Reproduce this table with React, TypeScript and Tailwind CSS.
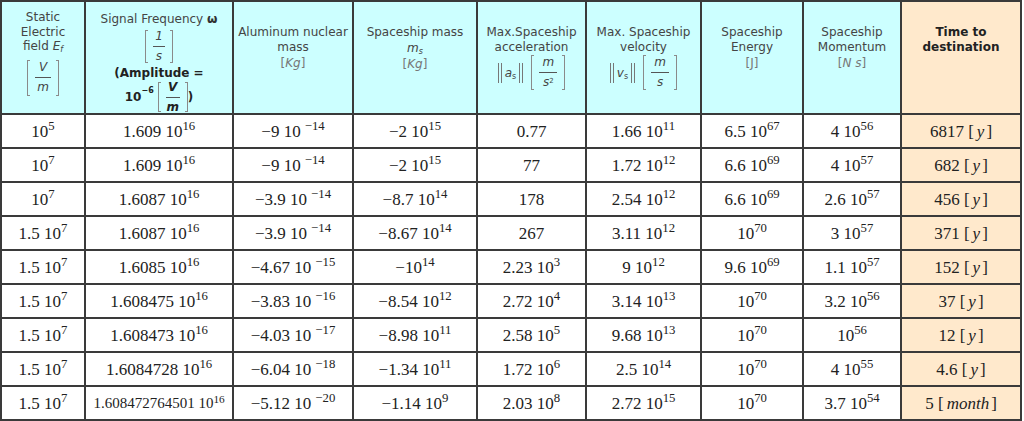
import React from 'react';

type Cell = [string, string?];

const rows: Cell[][] = [
    [['10', '5'], ['1.609 10', '16'], ['−9 10', '−14'], ['−2 10', '15'], ['0.77'], ['1.66 10', '11'], ['6.5 10', '67'], ['4 10', '56'], ['6817', 'y']],
    [['10', '7'], ['1.609 10', '16'], ['−9 10', '−14'], ['−2 10', '15'], ['77'], ['1.72 10', '12'], ['6.6 10', '69'], ['4 10', '57'], ['682', 'y']],
    [['10', '7'], ['1.6087 10', '16'], ['−3.9 10', '−14'], ['−8.7 10', '14'], ['178'], ['2.54 10', '12'], ['6.6 10', '69'], ['2.6 10', '57'], ['456', 'y']],
    [['1.5 10', '7'], ['1.6087 10', '16'], ['−3.9 10', '−14'], ['−8.67 10', '14'], ['267'], ['3.11 10', '12'], ['10', '70'], ['3 10', '57'], ['371', 'y']],
    [['1.5 10', '7'], ['1.6085 10', '16'], ['−4.67 10', '−15'], ['−10', '14'], ['2.23 10', '3'], ['9 10', '12'], ['9.6 10', '69'], ['1.1 10', '57'], ['152', 'y']],
    [['1.5 10', '7'], ['1.608475 10', '16'], ['−3.83 10', '−16'], ['−8.54 10', '12'], ['2.72 10', '4'], ['3.14 10', '13'], ['10', '70'], ['3.2 10', '56'], ['37', 'y']],
    [['1.5 10', '7'], ['1.608473 10', '16'], ['−4.03 10', '−17'], ['−8.98 10', '11'], ['2.58 10', '5'], ['9.68 10', '13'], ['10', '70'], ['10', '56'], ['12', 'y']],
    [['1.5 10', '7'], ['1.6084728 10', '16'], ['−6.04 10', '−18'], ['−1.34 10', '11'], ['1.72 10', '6'], ['2.5 10', '14'], ['10', '70'], ['4 10', '55'], ['4.6', 'y']],
    [['1.5 10', '7'], ['1.608472764501 10', '16'], ['−5.12 10', '−20'], ['−1.14 10', '9'], ['2.03 10', '8'], ['2.72 10', '15'], ['10', '70'], ['3.7 10', '54'], ['5', 'month']],
];

function Bracket({ side, h }: { side: 'l' | 'r'; h: string }) {
    return <span className={`w-[3px] ${h} border-y border-[#8a8a8a] ${side === 'l' ? 'border-l' : 'border-r'}`} />;
}

function Frac({ top, bottom, bold, h, w }: { top: React.ReactNode; bottom: React.ReactNode; bold?: boolean; h: string; w: string }) {
    return (
        <span className="inline-flex items-center">
            <Bracket side="l" h={h} />
            <span className={`flex flex-col items-center px-[5px] ${bold ? 'font-bold text-[#222]' : ''}`}>
                <span className="leading-[13px] italic">{top}</span>
                <span className={`h-px ${w} bg-[#555] my-[3px]`} />
                <span className="leading-[13px] italic">{bottom}</span>
            </span>
            <Bracket side="r" h={h} />
        </span>
    );
}

function Norm({ v }: { v: string }) {
    return (
        <span className="inline-flex items-center">
            <span className="h-[20px] w-[4px] border-x border-[#777]" />
            <span className="italic px-[3px] leading-none">
                {v}
                <sub className="text-[8px] not-italic">s</sub>
            </span>
            <span className="h-[20px] w-[4px] border-x border-[#777]" />
        </span>
    );
}

function Head({ children, first, peach, bold }: { children: React.ReactNode; first?: boolean; peach?: boolean; bold?: boolean }) {
    return (
        <div
            className={`flex flex-col items-center text-center text-[12px] leading-[14.5px] ${bold ? 'font-bold text-[#222]' : 'text-[#454545]'} ${first ? 'pt-[8px]' : 'pt-[23px]'} ${peach ? 'bg-[#ffe9cc]' : 'bg-[#ccffff]'}`}
        >
            {children}
        </div>
    );
}

function Value({ cell, last, small }: { cell: Cell; last: boolean; small: boolean }) {
    const [m, e] = cell;
    return (
        <div
            className={`flex items-center justify-center pt-[1px] font-['Liberation_Serif',serif] text-[#222] ${small ? 'text-[15px]' : 'text-[17px]'} ${last ? 'bg-[#ffe9cc]' : 'bg-white'}`}
        >
            {last ? (
                <span>
                    {m} [<span className="italic ml-[3px] mr-[2px]">{e}</span>]
                </span>
            ) : (
                <span>
                    {m}
                    {e && <sup className={e.startsWith('−') ? 'ml-[4px]' : ''}>{e}</sup>}
                </span>
            )}
        </div>
    );
}

export default function App() {
    return (
        <div className="w-[1024px] h-[421px] bg-white font-['DejaVu_Sans',sans-serif]">
            <div className="grid w-fit grid-cols-[82px_146px_118px_122px_107px_113px_100px_96px_118px] grid-rows-[111px_repeat(9,32px)] gap-[2px] border-2 border-[#3a3a3a] bg-[#3a3a3a]">
                <Head first>
                    <span>Static</span>
                    <span>Electric</span>
                    <span>
                        field <span className="italic">E</span>
                        <sub className="italic text-[8px]">f</sub>
                    </span>
                    <span className="mt-[6px]">
                        <Frac top="V" bottom="m" h="h-[36px]" w="w-[16px]" />
                    </span>
                </Head>
                <Head first>
                    <span className="mt-[2px]">
                        Signal Frequency <span className="font-bold text-[#333]">ω</span>
                    </span>
                    <span className="mt-[3px]">
                        <Frac top="1" bottom="s" h="h-[33px]" w="w-[12px]" />
                    </span>
                    <span className="font-bold text-[#222]">(Amplitude =</span>
                    <span className="flex items-center font-bold text-[#222]">
                        10<sup className="text-[8px] top-[-6px] mr-[4px]">−6</sup>
                        <Frac top="V" bottom="m" bold h="h-[30px]" w="w-[14px]" />)
                    </span>
                </Head>
                <Head>
                    <span>Aluminum nuclear</span>
                    <span>mass</span>
                    <span className="mt-[2px] text-[#777]">
                        [<span className="italic">Kg</span>]
                    </span>
                </Head>
                <Head>
                    <span>Spaceship mass</span>
                    <span className="italic leading-[16px]">
                        m<sub className="text-[8px]">s</sub>
                    </span>
                    <span className="mt-[1px] text-[#777]">
                        [<span className="italic">Kg</span>]
                    </span>
                </Head>
                <Head>
                    <span>Max.Spaceship</span>
                    <span>acceleration</span>
                    <span className="mt-[1px] flex items-center gap-[8px]">
                        <Norm v="a" />
                        <Frac
                            top="m"
                            bottom={
                                <span>
                                    s<sup className="not-italic text-[7px]">2</sup>
                                </span>
                            }
                            h="h-[35px]"
                            w="w-[18px]"
                        />
                    </span>
                </Head>
                <Head>
                    <span>Max. Spaceship</span>
                    <span>velocity</span>
                    <span className="mt-[1px] flex items-center gap-[8px]">
                        <Norm v="v" />
                        <Frac top="m" bottom="s" h="h-[35px]" w="w-[18px]" />
                    </span>
                </Head>
                <Head>
                    <span>Spaceship</span>
                    <span>Energy</span>
                    <span className="mt-[2px] text-[#777]">[J]</span>
                </Head>
                <Head>
                    <span>Spaceship</span>
                    <span>Momentum</span>
                    <span className="mt-[2px] text-[#777]">
                        [<span className="italic">N s</span>]
                    </span>
                </Head>
                <Head peach bold>
                    <span>Time to</span>
                    <span>destination</span>
                </Head>

                {rows.map((row, r) =>
                    row.map((cell, c) => <Value key={`${r}-${c}`} cell={cell} last={c === 8} small={r === 8 && c === 1} />)
                )}
            </div>
        </div>
    );
}
